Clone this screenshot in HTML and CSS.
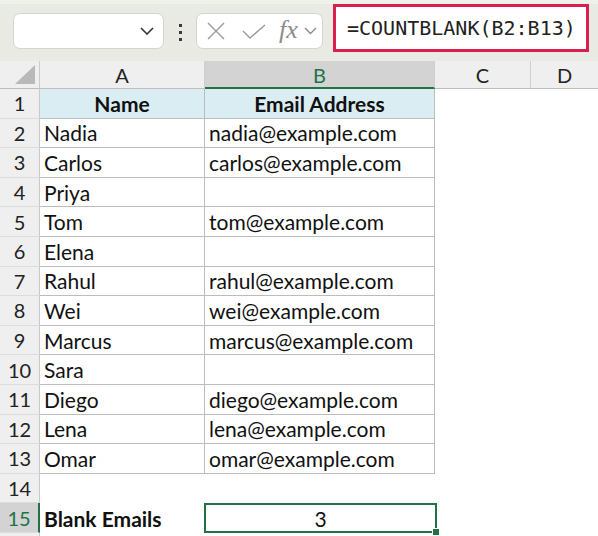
FILE: index.html
```html
<!DOCTYPE html>
<html>
<head>
<meta charset="utf-8">
<link rel="stylesheet" href="styles.css">
</head>
<body>
<div class="app">
  <div class="toolbar">
    <div class="namebox">
      <svg class="chev" width="14" height="8" viewBox="0 0 14 8"><path d="M1 1 L7 7 L13 1" fill="none" stroke="#333" stroke-width="1.6"/></svg>
    </div>
    <div class="dots"><span></span><span></span><span></span></div>
    <div class="fbuttons">
      <svg width="18" height="18" viewBox="0 0 18 18"><path d="M1 1 L17 17 M17 1 L1 17" stroke="#9a9a9a" stroke-width="1.4" fill="none"/></svg>
      <svg width="24" height="16" viewBox="0 0 24 16"><path d="M1 7 L8 14 L23 1" stroke="#9a9a9a" stroke-width="1.4" fill="none"/></svg>
      <span class="fx">fx</span>
      <svg width="13" height="8" viewBox="0 0 13 8"><path d="M1 1 L6.5 6.5 L12 1" fill="none" stroke="#8a8a8a" stroke-width="1.4"/></svg>
    </div>
    <div class="formula">=COUNTBLANK(B2:B13)</div>
  </div>
  <div class="sheet">
    <div class="corner"><span class="tri"></span></div>
    <div class="colhead">A</div>
    <div class="colhead sel">B</div>
    <div class="colhead">C</div>
    <div class="colhead last">D</div>

    <div class="rowhead">1</div><div class="cell th">Name</div><div class="cell th">Email Address</div><div class="blank"></div><div class="blank"></div>
    <div class="rowhead">2</div><div class="cell">Nadia</div><div class="cell">nadia@example.com</div><div class="blank"></div><div class="blank"></div>
    <div class="rowhead">3</div><div class="cell">Carlos</div><div class="cell">carlos@example.com</div><div class="blank"></div><div class="blank"></div>
    <div class="rowhead">4</div><div class="cell">Priya</div><div class="cell"></div><div class="blank"></div><div class="blank"></div>
    <div class="rowhead">5</div><div class="cell">Tom</div><div class="cell">tom@example.com</div><div class="blank"></div><div class="blank"></div>
    <div class="rowhead">6</div><div class="cell">Elena</div><div class="cell"></div><div class="blank"></div><div class="blank"></div>
    <div class="rowhead">7</div><div class="cell">Rahul</div><div class="cell">rahul@example.com</div><div class="blank"></div><div class="blank"></div>
    <div class="rowhead">8</div><div class="cell">Wei</div><div class="cell">wei@example.com</div><div class="blank"></div><div class="blank"></div>
    <div class="rowhead">9</div><div class="cell">Marcus</div><div class="cell">marcus@example.com</div><div class="blank"></div><div class="blank"></div>
    <div class="rowhead">10</div><div class="cell">Sara</div><div class="cell"></div><div class="blank"></div><div class="blank"></div>
    <div class="rowhead">11</div><div class="cell">Diego</div><div class="cell">diego@example.com</div><div class="blank"></div><div class="blank"></div>
    <div class="rowhead">12</div><div class="cell">Lena</div><div class="cell">lena@example.com</div><div class="blank"></div><div class="blank"></div>
    <div class="rowhead">13</div><div class="cell">Omar</div><div class="cell">omar@example.com</div><div class="blank"></div><div class="blank"></div>
    <div class="rowhead">14</div><div class="blank"></div><div class="blank"></div><div class="blank"></div><div class="blank"></div>
    <div class="rowhead sel">15</div><div class="blank bold">Blank Emails</div><div class="blank active">3<span class="handle"></span></div><div class="blank"></div><div class="blank"></div>
    <div class="rowhead stub"></div><div class="blank"></div><div class="blank"></div><div class="blank"></div><div class="blank"></div>
  </div>
</div>
</body>
</html>
```
FILE: styles.css
```css
* { box-sizing: border-box; }
html, body { margin: 0; padding: 0; background: #fff; }
body { width: 598px; height: 536px; overflow: hidden; font-family: Lato, "Open Sans", sans-serif; }

.toolbar {
  height: 61px;
  background: #e8eae3;
  border-top: 4px solid #eff1eb;
  display: flex;
  align-items: center;
  padding: 0 0 0 13px;
  position: relative;
}
.namebox {
  width: 151px; height: 36px;
  background: #fff;
  border: 1px solid #d4d5d0;
  border-radius: 7px;
  display: flex; align-items: center; justify-content: flex-end;
  padding-right: 9px;
  align-self: flex-start;
  margin-top: 9px;
}
.dots {
  width: 32px;
  display: flex; flex-direction: column; align-items: center; gap: 4px;
  align-self: flex-start; margin-top: 20px;
}
.dots span { width: 3px; height: 3px; background: #3a3a3a; display: block; }
.fbuttons {
  width: 127px; height: 36px;
  background: #fff;
  border: 1px solid #d4d5d0;
  border-radius: 7px;
  display: flex; align-items: center;
  padding-left: 10px;
  align-self: flex-start; margin-top: 9px;
}
.fbuttons svg:nth-child(1) { margin-right: 17px; }
.fbuttons svg:nth-child(2) { margin-right: 13px; margin-top: 1px; }
.fx {
  font-family: "Liberation Serif", serif;
  font-style: italic;
  font-size: 26px;
  color: #8c8c8c;
  margin-right: 6px;
  margin-top: -3px;
}
.formula {
  position: absolute;
  left: 333px; top: 0px;
  width: 256px; height: 48px;
  background: #fff;
  border: 3px solid #d8204f;
  font-family: "DejaVu Sans Mono", "Liberation Mono", monospace;
  font-size: 20px;
  color: #222;
  display: flex; align-items: center;
  padding-left: 11px;
}

.sheet {
  display: grid;
  grid-template-columns: 40px 165px 230px 96px 67px;
  grid-template-rows: 28px repeat(15, 29.6px) 3px;
  font-size: 21px;
  color: #111;
}
.corner {
  background: #efefef;
  border-right: 1px solid #cbcbcb;
  border-bottom: 1px solid #bdbdbd;
  position: relative;
}
.tri {
  position: absolute;
  right: 4px; bottom: 4px;
  width: 0; height: 0;
  border-left: 20px solid transparent;
  border-bottom: 19px solid #b9b9b9;
}
.colhead {
  background: #efefef;
  border-right: 1px solid #cfcfcf;
  border-bottom: 1px solid #bdbdbd;
  display: flex; align-items: center; justify-content: center;
  font-size: 20px;
  color: #222;
  padding-top: 1px;
}
.colhead.last { border-right: none; }
.colhead.sel {
  background: #d3d3d3;
  color: #217346;
  border-bottom: 2px solid #217346;
}
.rowhead {
  background: #efefef;
  border-right: 1px solid #c9c9c9;
  border-bottom: 1px solid #dcdcdc;
  display: flex; align-items: center; justify-content: center;
  color: #222;
  font-size: 20px;
}
.rowhead.stub { border-bottom: none; }
.rowhead.sel {
  background: #d3d3d3;
  color: #217346;
  border-right: 2px solid #217346;
}
.cell {
  border-right: 1px solid #bcbcbc;
  border-bottom: 1px solid #bcbcbc;
  display: flex; align-items: center;
  padding-left: 4px;
  white-space: nowrap;
}
.cell.th {
  background: #daedf3;
  font-weight: bold;
  justify-content: center;
  padding-left: 0;
}
.blank {
  display: flex; align-items: center;
  padding-left: 4px;
  white-space: nowrap;
}
.bold { font-weight: bold; }
.active {
  border: 2px solid #217346;
  justify-content: center;
  padding-left: 0;
  position: relative;
  margin-left: -1px;
  margin-right: -2px;
}
.handle {
  position: absolute;
  right: -5px; bottom: -5px;
  width: 8px; height: 8px;
  background: #217346;
  border: 1px solid #fff;
}
```
